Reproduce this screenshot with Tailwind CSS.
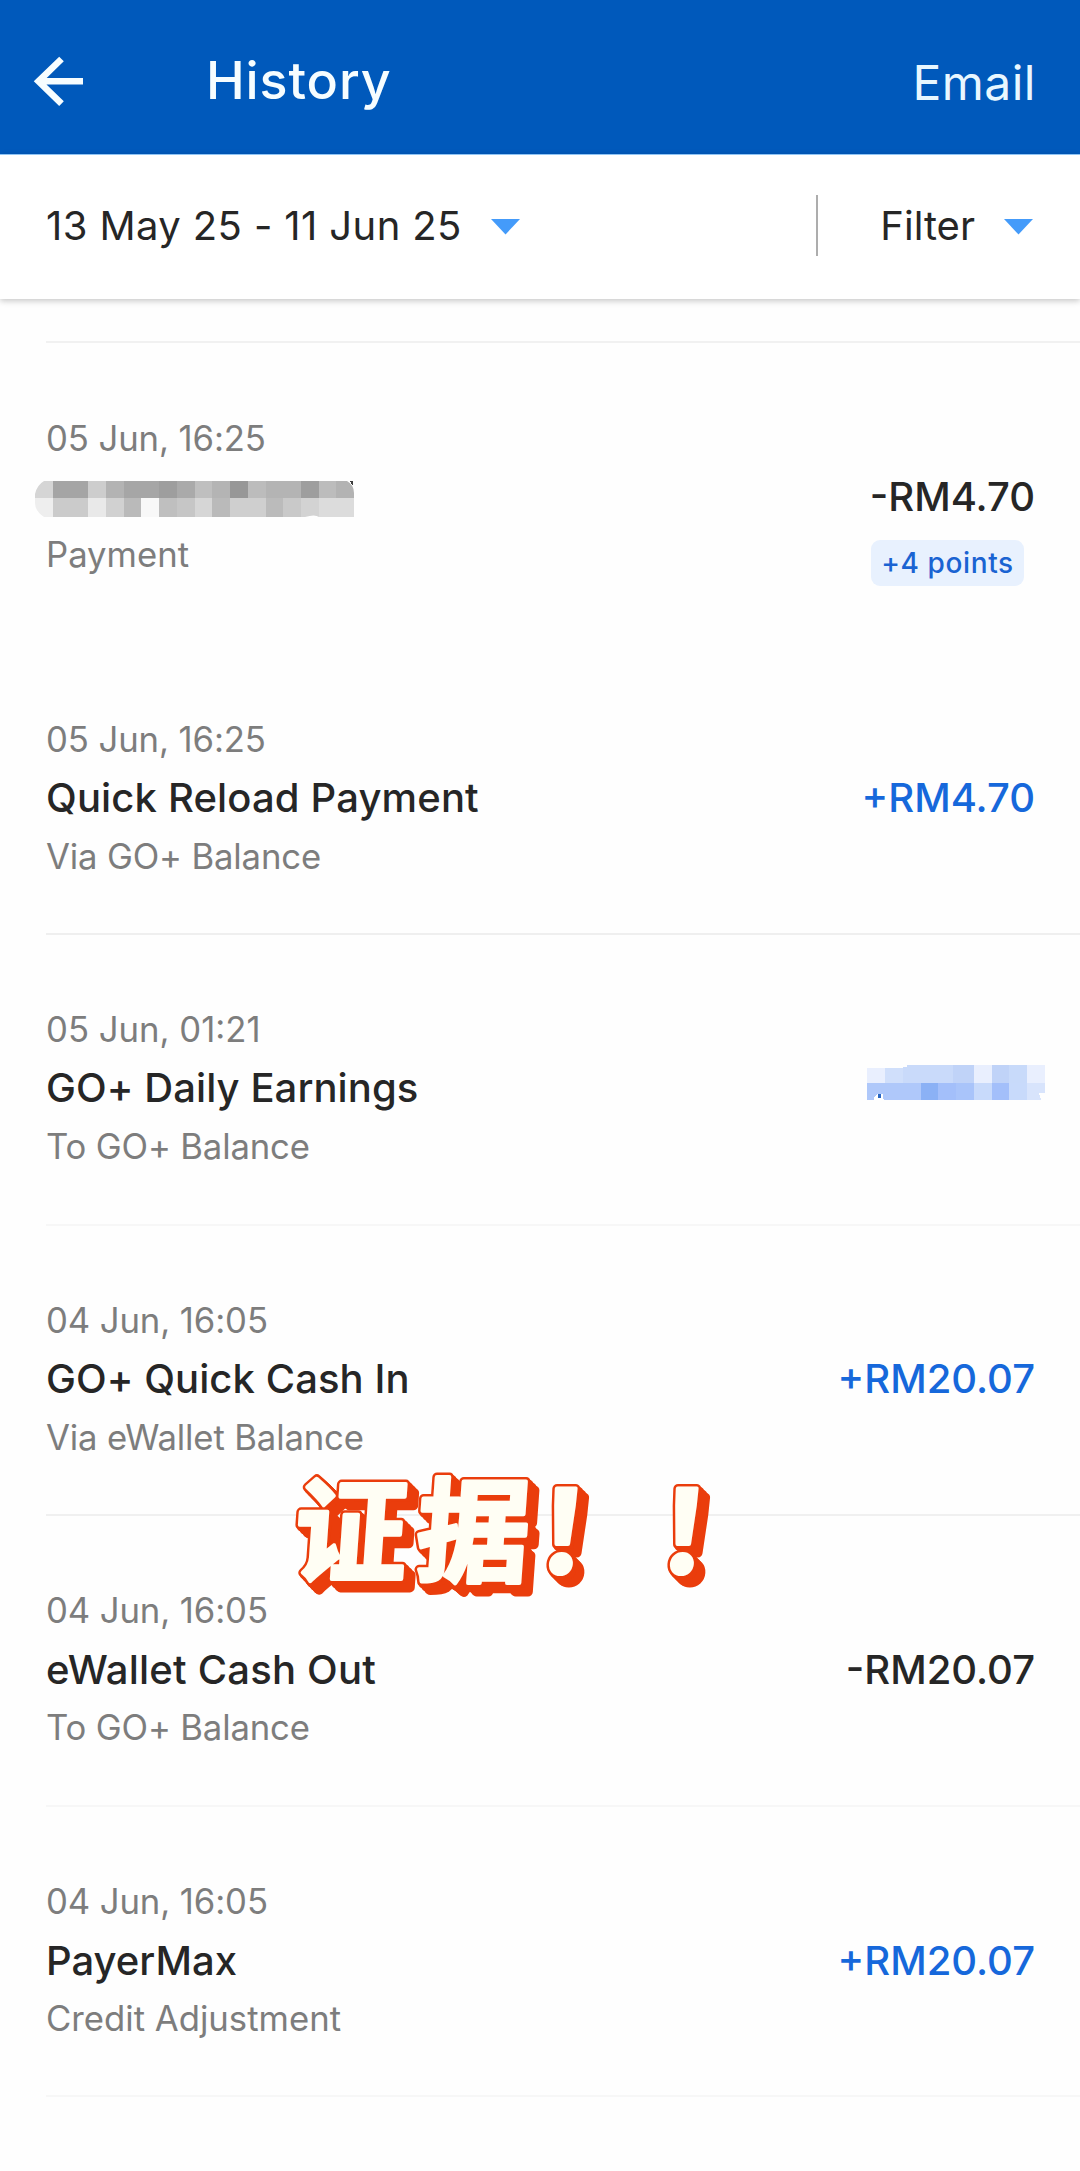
<!DOCTYPE html>
<html lang="en">
<head>
<meta charset="utf-8">
<title>History</title>
<script src="https://cdn.jsdelivr.net/npm/@tailwindcss/browser@4"></script>
</head>
<body class="relative h-[2171px] w-[1080px] overflow-hidden bg-[#fefefe] font-['Inter',sans-serif] text-[#262626]">

<header class="flex h-[154px] items-start bg-[#0059bb] text-[#f6fdff]">
  <svg class="ml-[32px] mt-[55px] h-[52px] w-[54px] shrink-0" viewBox="0 0 54 52" fill="none" stroke="currentColor" stroke-width="6.6">
    <path d="M51 26.3H6M29.5 4 6.5 26.3 29.5 48.6"/>
  </svg>
  <h1 class="ml-[120px] mt-[49px] text-[52px] leading-[64px] font-medium tracking-[0.9px]">History</h1>
  <button class="mr-[44px] ml-auto mt-[54px] text-[48px] leading-[58px] tracking-[0.5px] text-[#e8f7ff]">Email</button>
</header>

<section class="relative flex h-[144.5px] items-center border-t border-[#8fc4f4] bg-white pr-[47px] pb-[2px] pl-[46px] text-[40px] leading-[48px] shadow-[0_2px_6px_rgba(0,0,0,0.22)]">
  <span class="tracking-[0.4px]">13 May 25 - 11 Jun 25</span>
  <svg class="mt-[2px] ml-[29px] h-[16px] w-[29px] shrink-0" viewBox="0 0 29 16"><path d="M0 0h29L14.5 15.5z" fill="#449bfa"/></svg>
  <span class="mr-[62px] ml-auto h-[61px] w-[2px] bg-[#adadad]"></span>
  <span>Filter</span>
  <svg class="mt-[2px] ml-[29px] h-[16px] w-[29px] shrink-0" viewBox="0 0 29 16"><path d="M0 0h29L14.5 15.5z" fill="#449bfa"/></svg>
</section>

<main class="pl-[46px]">
  <div class="h-[44px] border-b-2 border-[#f1f1f1]"></div>

  <article class="flex h-[301px] justify-between pt-[66px] pr-[45px]">
    <div class="text-[34.7px] leading-[58px] text-[#7d7d7d]">
      <p class="-tracking-[0.1px]">05 Jun, 16:25</p>
      <svg class="-ml-[11px] mt-[14px] mb-[8px] block h-[36px] w-[320px]" viewBox="0 0 320 36" shape-rendering="crispEdges">
        <defs><clipPath id="pill"><path d="M9 0H312Q319 4 319 12V36H284Q280 33 270 36H9Q0 30 0 22V13Q2 4 9 0Z"/></clipPath></defs>
        <g clip-path="url(#pill)">
          <path fill="#d5d5d5" d="M0 0h18v17H0z"/><path fill="#a5a5a5" d="M18 0h35v17H18z"/><path fill="#cdcdcd" d="M53 0h18v17H53z"/><path fill="#b3b3b3" d="M71 0h18v17H71z"/><path fill="#a6a6a6" d="M89 0h35v17H89z"/><path fill="#9e9e9e" d="M124 0h18v17h-18z"/><path fill="#aaa" d="M142 0h18v17h-18z"/><path fill="#bfbfbf" d="M160 0h17v17h-17z"/><path fill="#b4b4b4" d="M177 0h18v17h-18z"/><path fill="#979797" d="M195 0h18v17h-18z"/><path fill="#bcbcbc" d="M213 0h18v17h-18z"/><path fill="#b4b4b4" d="M231 0h35v17h-35z"/><path fill="#9e9e9e" d="M266 0h18v17h-18z"/><path fill="#bcbcbc" d="M284 0h17v17h-17z"/><path fill="#b3b3b3" d="M301 0h18v17h-18z"/>
          <path fill="#eee" d="M0 17h18v19H0z"/><path fill="#cbcbcb" d="M18 17h35v19H18z"/><path fill="#e9e9e9" d="M53 17h18v19H53z"/><path fill="#d1d1d1" d="M71 17h18v19H71z"/><path fill="#bababa" d="M89 17h17v19H89z"/><path fill="#f8f8f8" d="M106 17h18v19h-18z"/><path fill="#bfbfbf" d="M124 17h18v19h-18z"/><path fill="#c6c6c6" d="M142 17h18v19h-18z"/><path fill="#d6d6d6" d="M160 17h17v19h-17z"/><path fill="#bababa" d="M177 17h18v19h-18z"/><path fill="#cfcfcf" d="M195 17h36v19h-36z"/><path fill="#bbb" d="M231 17h17v19h-17z"/><path fill="#c9c9c9" d="M248 17h18v19h-18z"/><path fill="#d3d3d3" d="M266 17h18v19h-18z"/><path fill="#dcdcdc" d="M284 17h35v19h-35z"/>
        </g>
        <path fill="#3c3c3c" d="M315 0h3v4h-1z"/>
      </svg>
      <p>Payment</p>
    </div>
    <div class="flex flex-col items-end pt-[58px]">
      <p class="text-[40px] leading-[59px] font-medium">-RM4.70</p>
      <span class="mt-[14px] mr-[11px] flex h-[46px] w-[153px] items-center justify-center rounded-[9px] bg-[#e8f1fe] text-[28px] font-medium tracking-[0.6px] text-[#1a63d2]">+4 points</span>
    </div>
  </article>

  <article class="flex h-[291.5px] justify-between border-b-2 border-[#efefef] pt-[66px] pr-[45px]">
    <div class="text-[34.7px] leading-[58px] text-[#7d7d7d]">
      <p class="-tracking-[0.1px]">05 Jun, 16:25</p>
      <h2 class="text-[40px] leading-[59px] font-medium tracking-[0.15px] text-[#262626]">Quick Reload Payment</h2>
      <p class="-tracking-[0.15px]">Via GO+ Balance</p>
    </div>
    <p class="pt-[58px] text-[40px] leading-[59px] font-medium text-[#1668db]">+RM4.70</p>
  </article>

  <article class="flex h-[290.5px] justify-between border-b-2 border-[#f7f7f7] pt-[65px] pr-[45px]">
    <div class="text-[34.7px] leading-[58px] text-[#7d7d7d]">
      <p>05 Jun, 01:21</p>
      <h2 class="pt-px text-[40px] leading-[58px] font-medium tracking-[0.08px] text-[#262626]">GO+ Daily Earnings</h2>
      <p class="-tracking-[0.15px]">To GO+ Balance</p>
    </div>
    <svg class="-mr-[10px] mt-[65px] h-[36px] w-[178px]" viewBox="0 0 178 36" shape-rendering="crispEdges">
      <path fill="#e9effe" d="M0 3h18v15H0zM107 0h18v18h-18zM160 0h18v18h-18z"/><path fill="#d0dffb" d="M18 3h18v15H18z"/><path fill="#c9dafa" d="M36 2h4V0h46v18H36z"/><path fill="#c0d3f8" d="M86 0h21v18H86zM125 0h17v18h-17z"/><path fill="#c8dafa" d="M142 0h18v18h-18z"/>
      <path fill="#afc8fa" d="M0 18h54v17H17l-4-7-6 7H0z"/><path fill="#8bb1f5" d="M54 18h17v17H54z"/><path fill="#a3bffa" d="M71 18h18v17H71zM125 18h17v17h-17z"/><path fill="#a9c4fa" d="M89 18h18v17H89z"/><path fill="#c8dafb" d="M107 18h18v17h-18zM142 18h18v17h-18z"/><path fill="#d8e4fc" d="M160 18h18v10h-6l2 7h-14z"/><path fill="#fff" d="M7 35v-3l4-3h5v6z"/><path fill="#2867c4" d="M11 29h3v4h-3z"/>
    </svg>
  </article>

  <article class="flex h-[290.5px] justify-between border-b-2 border-[#f0f0f0] pt-[65px] pr-[45px]">
    <div class="text-[34.7px] leading-[58px] text-[#7d7d7d]">
      <p class="-tracking-[0.1px]">04 Jun, 16:05</p>
      <h2 class="text-[40px] leading-[59px] font-medium tracking-[0.08px] text-[#262626]">GO+ Quick Cash In</h2>
      <p class="-tracking-[0.15px]">Via eWallet Balance</p>
    </div>
    <p class="pt-[58px] text-[40px] leading-[59px] font-medium text-[#1668db]">+RM20.07</p>
  </article>

  <article class="flex h-[290.5px] justify-between border-b-2 border-[#f7f7f7] pt-[65px] pr-[45px]">
    <div class="text-[34.7px] leading-[58px] text-[#7d7d7d]">
      <p class="-tracking-[0.1px]">04 Jun, 16:05</p>
      <h2 class="pt-[2px] text-[40px] leading-[57px] font-medium tracking-[0.2px] text-[#262626]">eWallet Cash Out</h2>
      <p class="-tracking-[0.15px]">To GO+ Balance</p>
    </div>
    <p class="pt-[59px] text-[40px] leading-[59px] font-medium">-RM20.07</p>
  </article>

  <article class="flex h-[290.5px] justify-between border-b-2 border-[#f7f7f7] pt-[65px] pr-[45px]">
    <div class="text-[34.7px] leading-[58px] text-[#7d7d7d]">
      <p class="-tracking-[0.1px]">04 Jun, 16:05</p>
      <h2 class="pt-[2px] text-[40px] leading-[57px] font-medium text-[#262626]">PayerMax</h2>
      <p>Credit Adjustment</p>
    </div>
    <p class="pt-[59px] text-[40px] leading-[59px] font-medium text-[#1668db]">+RM20.07</p>
  </article>
</main>

<!-- Sticker caption: slanted text with an extruded orange edge -->
<svg class="absolute top-[1460px] left-[280px] h-[150px] w-[450px] overflow-visible font-['Noto_Sans_CJK_SC',sans-serif] text-[113px] font-bold" viewBox="0 0 450 150" stroke-linejoin="round" stroke-linecap="round" lang="zh">
  <defs><text id="caption" transform="translate(12 113) skewX(-4)" x="0 122 240 361" y="0">证据！！</text></defs>
  <g fill="#ea3d0c" stroke="#ea3d0c" stroke-width="9">
    <use href="#caption"/><use href="#caption" x="1.5" y="1.5"/><use href="#caption" x="3" y="3"/><use href="#caption" x="4.5" y="4.5"/><use href="#caption" x="6" y="6"/><use href="#caption" x="7.5" y="7.5"/><use href="#caption" x="9" y="9"/>
  </g>
  <use href="#caption" fill="#fffef4" stroke="#fffef4" stroke-width="4"/>
</svg>
</body>
</html>
